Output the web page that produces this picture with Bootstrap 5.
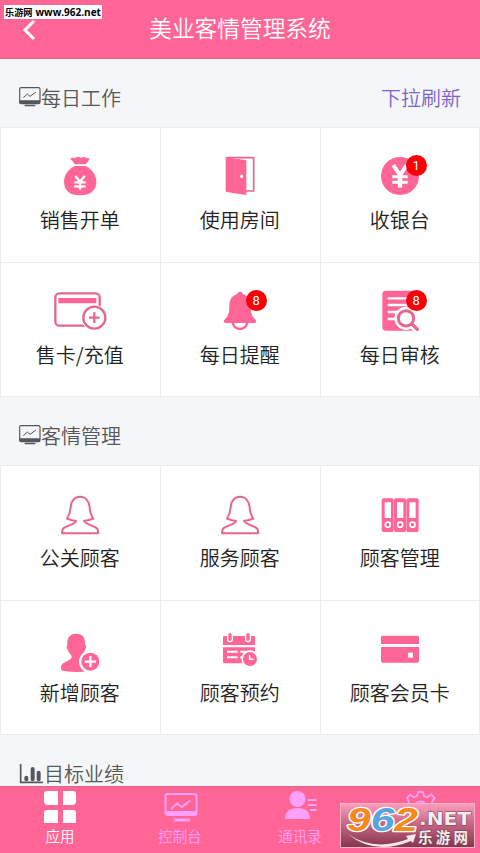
<!DOCTYPE html>
<html lang="zh-CN">
<head>
<meta charset="utf-8">
<meta name="viewport" content="width=device-width, initial-scale=1">
<title>美业客情管理系统</title>
<link href="https://cdn.jsdelivr.net/npm/bootstrap@5.3.0/dist/css/bootstrap.min.css" rel="stylesheet">
<style>
:root{--pink:#ff6696;--line:#ececee}
body{font-family:"Noto Sans CJK SC",sans-serif;font-weight:350;background:#f5f6f8;width:480px;height:853px;overflow:hidden;color:#222}
svg{display:block;overflow:visible;flex:none}
.topbar{height:59px;background:var(--pink);border-bottom:1px solid #e2668e}
.topbar h1{font-size:22.7px;font-weight:350;line-height:56px}
.back-btn{left:22px;top:19px}
.section-head{height:68px;padding:10px 19px 0 19px;font-size:20px;line-height:30px;color:#55575a}
.section-head svg{margin-bottom:2px}
.refresh{color:#7a62cc}
.tiles{height:270px;box-shadow:inset 0 -1px var(--line)}
.tile{height:135px;padding:28px 1.5px 0 0;background:#fff;border-left:1.5px solid var(--line);border-top:1.5px solid var(--line);font-size:20px;width:160px;flex:none}
.tile:nth-child(3n){border-right:1px solid var(--line);padding-right:.5px}
.tile:nth-child(n+4){border-bottom:1px solid var(--line)}
.tile-label{line-height:30px;margin-top:9px;white-space:nowrap}
.glyph{width:40px;height:40px;color:var(--pink)}
.count{left:26px;top:-1px;width:21px;height:21px;background:#f90006;color:#fff;font:13px/21px Roboto,sans-serif}
.tabs{height:67px;background:var(--pink);border-top:1px solid #e2668e;color:#ffa0fa;font-size:14.5px}
.tabs span{line-height:22px}
.tabs .tab{width:120px;padding-top:3px}
.tag-top{left:4px;top:5px;width:98px;height:14px;background:#fff;color:#000;font-size:9.2px;font-weight:700;line-height:14px;padding-left:1px;white-space:nowrap}
.tag-top b{font:700 10px/13px "Open Sans",sans-serif;margin-left:3px}
.tag-bottom{left:340px;top:803px}
</style>
<script src="https://cdn.jsdelivr.net/npm/bootstrap@5.3.0/dist/js/bootstrap.bundle.min.js"></script>
</head>
<body class="d-flex flex-column position-relative">
<svg width="0" height="0" class="position-absolute">
  <symbol id="monitor" viewBox="0 0 66 60" overflow="visible">
    <rect x="2" y="2" width="61" height="48" rx="4" fill="none" stroke="currentColor" stroke-width="3.5"/>
    <path d="M2 40H63V47Q63 50 60 50H5Q2 50 2 47ZM17 53H49V57.500H17Z" fill="currentColor"/>
    <path d="M13 32L25 21L33 28L51 15" fill="none" stroke="currentColor" stroke-width="3"/>
  </symbol>
  <symbol id="lady" viewBox="0 0 120 120" overflow="visible">
    <path d="M60 8C42 8 33 23 32 39C31 55 28 64 21 74Q32 79 48 81Q47 86 35 91L13 101Q6 105 6 118H115Q115 105 108 101L86 91Q74 86 72 81Q89 79 100 74C92 64 90 55 89 39C87 23 78 8 60 8Z" fill="none" stroke="#e5668f" stroke-width="6" stroke-linejoin="round"/>
  </symbol>
</svg>

<header class="topbar position-relative text-white text-center flex-shrink-0">
  <svg class="back-btn position-absolute" width="14" height="22" viewBox="0 0 14 22"><path d="M12 2L3 11L12 20" fill="none" stroke="#fff" stroke-width="3"/></svg>
  <h1 class="m-0">美业客情管理系统</h1>
</header>

<main class="flex-grow-1 overflow-hidden">
  <div class="section-head d-flex align-items-center">
    <svg width="22" height="20"><use href="#monitor"/></svg><span>每日工作</span><span class="refresh ms-auto">下拉刷新</span>
  </div>
  <div class="tiles d-flex flex-wrap">
    <div class="tile d-flex flex-column align-items-center">
      <svg class="glyph" viewBox="0 0 120 120" fill="currentColor"><path d="M31 9Q35 3 40 5Q45 8 49 4Q54 1 59 4Q64 7 69 3Q75 2 78 6L89 7Q85 18 77 25H44Q39 14 31 9Z"/><path d="M44 30H77C95 39 109 56 109 78C109 104 89 118 60 118S12 104 12 78C12 56 26 39 44 30Z"/><path d="M46 60L60 77L74 60M60 77V101M43 79H77M43 91H77" fill="none" stroke="#fff" stroke-width="7"/></svg>
      <div class="tile-label">销售开单</div>
    </div>
    <div class="tile d-flex flex-column align-items-center">
      <svg class="glyph" viewBox="0 0 120 120"><path d="M19 5H101V105H78" fill="none" stroke="#e5668f" stroke-width="5" stroke-linejoin="round"/><path d="M17 4L75 12Q79 13 79 16V117L20 108Q17 107 17 104Z" fill="currentColor"/><ellipse cx="65" cy="61" rx="4.500" ry="5.500" fill="#fff"/></svg>
      <div class="tile-label">使用房间</div>
    </div>
    <div class="tile d-flex flex-column align-items-center">
      <div class="position-relative">
        <svg class="glyph" viewBox="0 0 120 120"><circle cx="60" cy="60" r="57" fill="currentColor"/><path d="M40 27L60 58L80 27" fill="none" stroke="#fff" stroke-width="12"/><path d="M37 62H83M37 79H83" fill="none" stroke="#fff" stroke-width="9"/><path d="M60 56V95" stroke="#fff" stroke-width="13"/></svg>
        <span class="count position-absolute rounded-circle text-center">1</span>
      </div>
      <div class="tile-label">收银台</div>
    </div>
    <div class="tile d-flex flex-column align-items-center">
      <svg class="glyph" viewBox="0 0 120 120"><rect x="-14" y="7" width="133" height="97" rx="12" fill="none" stroke="#e5668f" stroke-width="7"/><path d="M-5 21H109V37H-5Z" fill="currentColor"/><circle cx="103" cy="80" r="39" fill="#fff"/><circle cx="103" cy="80" r="33" fill="none" stroke="#e5668f" stroke-width="7"/><path d="M103 64V96M87 80H119" stroke="#e5668f" stroke-width="7"/></svg>
      <div class="tile-label">售卡/充值</div>
    </div>
    <div class="tile d-flex flex-column align-items-center">
      <div class="position-relative">
        <svg class="glyph" viewBox="0 0 120 120"><circle cx="60" cy="92" r="22" fill="none" stroke="currentColor" stroke-width="7"/><path d="M52 9Q53 2 60 2T68 9C86 15 92 27 92 46C92 68 96 77 108 88Q110 95 103 96H17Q10 95 12 88C24 77 28 68 28 46C28 27 34 15 52 9Z" fill="currentColor"/></svg>
        <span class="count position-absolute rounded-circle text-center">8</span>
      </div>
      <div class="tile-label">每日提醒</div>
    </div>
    <div class="tile d-flex flex-column align-items-center">
      <div class="position-relative">
        <svg class="glyph" viewBox="0 0 120 120"><rect x="7" y="-1" width="98" height="120" rx="11" fill="currentColor"/><path d="M26 22H86M26 42H86M26 63H50M26 84H42" stroke="#fff" stroke-width="7" stroke-linecap="round"/><circle cx="78" cy="82" r="35" fill="#fff"/><path d="M82 86L118 122" stroke="#fff" stroke-width="24"/><circle cx="78" cy="82" r="23" fill="#fff" stroke="#e5668f" stroke-width="9"/><path d="M95 99L112 115" stroke="#e5668f" stroke-width="10" stroke-linecap="round"/></svg>
        <span class="count position-absolute rounded-circle text-center">8</span>
      </div>
      <div class="tile-label">每日审核</div>
    </div>
  </div>

  <div class="section-head d-flex align-items-center">
    <svg width="22" height="20"><use href="#monitor"/></svg><span>客情管理</span>
  </div>
  <div class="tiles d-flex flex-wrap">
    <div class="tile d-flex flex-column align-items-center">
      <svg class="glyph"><use href="#lady"/></svg>
      <div class="tile-label">公关顾客</div>
    </div>
    <div class="tile d-flex flex-column align-items-center">
      <svg class="glyph"><use href="#lady"/></svg>
      <div class="tile-label">服务顾客</div>
    </div>
    <div class="tile d-flex flex-column align-items-center">
      <svg class="glyph" viewBox="0 0 120 120"><g fill="currentColor"><rect x="5" y="13" width="36" height="101" rx="6"/><rect x="42" y="13" width="36" height="101" rx="6"/><rect x="79" y="13" width="37" height="101" rx="6"/></g><path d="M14 25H33V72H14ZM51 25H70V72H51ZM88 25H107V72H88Z" fill="#fff"/><g fill="#e5668f" stroke="#fff" stroke-width="5"><circle cx="23.500" cy="92" r="7.500"/><circle cx="60.500" cy="92" r="7.500"/><circle cx="97.500" cy="92" r="7.500"/></g></svg>
      <div class="tile-label">顾客管理</div>
    </div>
    <div class="tile d-flex flex-column align-items-center">
      <svg class="glyph" viewBox="0 0 120 120"><path d="M48 14C66 14 76 24 75 43Q75 49 78 51Q80 56 74 65C71 76 66 79 66 87C66 94 72 96 84 101V126Q68 129 48 129Q20 129 5 124Q2 122 3 113C4 98 35 96 35 84C34 76 27 74 24 64Q18 59 20 52L22 48C20 26 30 14 48 14Z" fill="currentColor"/><circle cx="91" cy="98" r="34" fill="#fff"/><circle cx="91" cy="98" r="27" fill="currentColor"/><path d="M91 81V115M74 98H108" stroke="#fff" stroke-width="7"/></svg>
      <div class="tile-label">新增顾客</div>
    </div>
    <div class="tile d-flex flex-column align-items-center">
      <svg class="glyph" viewBox="0 0 120 120"><path d="M13 21H101Q105 21 105 25V48H9V25Q9 21 13 21ZM9 55H105V103H13Q9 103 9 99Z" fill="currentColor"/><g fill="currentColor" stroke="#fff" stroke-width="4"><rect x="23" y="10" width="14" height="28" rx="7"/><rect x="77" y="10" width="14" height="28" rx="7"/></g><path d="M21 68H53M21 85H53M61 68H92M61 85H75" stroke="#fff" stroke-width="6"/><circle cx="90" cy="90" r="26" fill="#fff"/><circle cx="90" cy="90" r="21" fill="currentColor"/><path d="M89 78V91H101" stroke="#fff" stroke-width="4.500" fill="none"/></svg>
      <div class="tile-label">顾客预约</div>
    </div>
    <div class="tile d-flex flex-column align-items-center">
      <svg class="glyph" viewBox="0 0 120 120" fill="currentColor"><path d="M8 20H112Q117 20 117 25V45H3V25Q3 20 8 20ZM3 54H117V96Q117 101 112 101H8Q3 101 3 96Z"/><path d="M84 71H99V86H84Z" fill="#fff"/></svg>
      <div class="tile-label">顾客会员卡</div>
    </div>
  </div>

  <div class="section-head d-flex align-items-center">
    <svg width="25" height="21" viewBox="0 0 75 63"><g stroke="currentColor" stroke-linecap="round" fill="none"><path d="M5 5V58H70" stroke-width="5"/><path d="M22 44V49M41 18V49M59 29V49" stroke-width="12"/></g></svg><span>目标业绩</span>
  </div>
</main>

<nav class="tabs d-flex flex-shrink-0">
  <div class="tab d-flex flex-column align-items-center text-white">
    <svg width="34" height="35" viewBox="0 0 34 35" fill="#fff"><path d="M4 1H15V15H5Q1 15 1 11V4Q1 1 4 1ZM20 1H30Q33 1 33 4V11Q33 15 29 15H20ZM4 20H15V33H1V23Q1 20 4 20ZM20 20H30Q33 20 33 23V33H20Z"/></svg>
    <span>应用</span>
  </div>
  <div class="tab d-flex flex-column align-items-center">
    <svg width="34" height="35" viewBox="0 0 34 35"><g fill="none" stroke="currentColor"><rect x="2.500" y="4" width="31" height="21" rx="2" stroke-width="2"/><path d="M8 19L14 13.500L19 17L27 10.500" stroke-width="2"/><path d="M12 30H26" stroke-width="3" stroke-linecap="round"/></g><path d="M2 21H34V25H2Z" fill="currentColor"/></svg>
    <span>控制台</span>
  </div>
  <div class="tab d-flex flex-column align-items-center">
    <svg width="34" height="35" viewBox="0 0 34 35"><circle cx="14.500" cy="9" r="8" fill="currentColor"/><path d="M2 29Q2 18 14.500 18T27 29Z" fill="currentColor"/><path d="M25 10H33.500M25 15H33.500M27 20H33.500" stroke="currentColor" stroke-width="2"/></svg>
    <span>通讯录</span>
  </div>
  <div class="tab d-flex flex-column align-items-center">
    <svg width="34" height="35" viewBox="0 0 34 35"><g fill="none" stroke="currentColor" stroke-width="1.800" stroke-linejoin="round"><path d="M15 2H20L21 6L24 7.500L28 4.500L31.500 8L29 12L30 15H33V20H30L29 23L31 27L28 30L24 28L21 29V33H15L14 29L11 28L7 30L4 27L6 23L5 20H2V15H5L6 12L4 8L7 4.500L11 7.500L14 6Z"/><circle cx="17.500" cy="17.500" r="6"/></g></svg>
  </div>
</nav>

<div class="tag-top position-absolute">乐游网<b>www.962.net</b></div>

<svg class="tag-bottom position-absolute" width="135" height="45" viewBox="0 0 135 45">
  <defs>
    <linearGradient id="plate" x2="0" y2="1"><stop offset="0" stop-color="#fba3bf"/><stop offset=".45" stop-color="#c56685"/><stop offset="1" stop-color="#793347"/></linearGradient>
  </defs>
  <rect x=".5" y=".5" width="134" height="44" fill="url(#plate)" fill-opacity=".93" stroke="#f8b3c6"/>
  <text x="7" y="27.500" textLength="71" lengthAdjust="spacingAndGlyphs" font-family="'Liberation Sans',sans-serif" font-weight="700" font-style="italic" font-size="33" fill="#f58a1f" stroke="#fff" stroke-width="2.500" paint-order="stroke" stroke-linejoin="round">9<tspan fill="#56a5dd">6</tspan>2</text>
  <path d="M8 31Q34 49 68 36L66 33L76 31L73 40L71 38Q34 53 8 31Z" fill="#f3e9ec"/>
  <g fill="#f6edf0" stroke="#6d4350" stroke-width="1" paint-order="stroke">
    <text x="79" y="22" textLength="52" lengthAdjust="spacingAndGlyphs" font-family="'DejaVu Sans',sans-serif" font-weight="700" font-size="18">.NET</text>
    <text x="78" y="40" textLength="50" font-family="'Noto Sans CJK SC',sans-serif" font-weight="700" font-size="14.500">乐游网</text>
  </g>
</svg>
</body>
</html>
